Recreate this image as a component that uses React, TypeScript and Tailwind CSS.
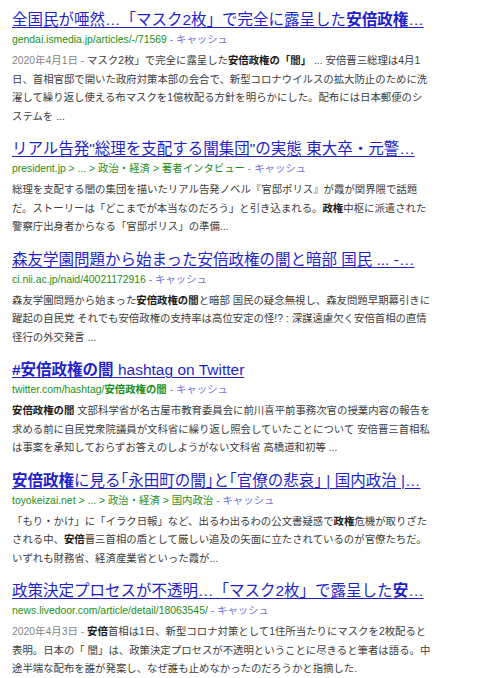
import React from "react";

type Result = {
  title: string;
  url: string;
  date?: string;
  lines: string[];
};

// **...** marks the bold (matched) parts
const results: Result[] = [
  {
    title: "全国民が唖然…「マスク2枚」で完全に露呈した**安倍政権**…",
    url: "gendai.ismedia.jp/articles/-/71569",
    date: "2020年4月1日",
    lines: [
      "マスク2枚」で完全に露呈した**安倍政権の「闇」** ... 安倍晋三総理は4月1",
      "日、首相官邸で開いた政府対策本部の会合で、新型コロナウイルスの拡大防止のために洗",
      "濯して繰り返し使える布マスクを1億枚配る方針を明らかにした。配布には日本郵便のシ",
      "ステムを ...",
    ],
  },
  {
    title: "リアル告発\"総理を支配する闇集団\"の実態 東大卒・元警…",
    url: "president.jp > ... > 政治・経済 > 著者インタビュー",
    lines: [
      "総理を支配する闇の集団を描いたリアル告発ノベル『官邸ポリス』が霞が関界隈で話題",
      "だ。ストーリーは「どこまでが本当なのだろう」と引き込まれる。**政権**中枢に派遣された",
      "警察庁出身者からなる「官邸ポリス」の準備...",
    ],
  },
  {
    title: "森友学園問題から始まった安倍政権の闇と暗部 国民 ... -…",
    url: "ci.nii.ac.jp/naid/40021172916",
    lines: [
      "森友学園問題から始まった**安倍政権の闇**と暗部 国民の疑念無視し、森友問題早期幕引きに",
      "躍起の自民党 それでも安倍政権の支持率は高位安定の怪!? : 深謀遠慮欠く安倍首相の直情",
      "径行の外交発言 ...",
    ],
  },
  {
    title: "**#安倍政権の闇** hashtag on Twitter",
    url: "twitter.com/hashtag/**安倍政権の闇**",
    lines: [
      "**安倍政権の闇** 文部科学省が名古屋市教育委員会に前川喜平前事務次官の授業内容の報告を",
      "求める前に自民党衆院議員が文科省に繰り返し照会していたことについて 安倍晋三首相私",
      "は事案を承知しておらずお答えのしようがない文科省 高橋道和初等 ...",
    ],
  },
  {
    title: "**安倍政権**に見る｢永田町の闇｣と｢官僚の悲哀｣ | 国内政治 |…",
    url: "toyokeizai.net > ... > 政治・経済 > 国内政治",
    lines: [
      "「もり・かけ」に「イラク日報」など、出るわ出るわの公文書疑惑で**政権**危機が取りざた",
      "される中、**安倍**晋三首相の盾として厳しい追及の矢面に立たされているのが官僚たちだ。",
      "いずれも財務省、経済産業省といった霞が...",
    ],
  },
  {
    title: "政策決定プロセスが不透明…「マスク2枚」で露呈した**安**…",
    url: "news.livedoor.com/article/detail/18063545/",
    date: "2020年4月3日",
    lines: [
      "**安倍**首相は1日、新型コロナ対策として1住所当たりにマスクを2枚配ると",
      "表明。日本の「 闇」は、政策決定プロセスが不透明ということに尽きると筆者は語る。中",
      "途半端な配布を誰が発案し、なぜ誰も止めなかったのだろうかと指摘した.",
    ],
  },
];

function Marked({ text, boldClass }: { text: string; boldClass: string }) {
  const parts = text.split("**");
  return (
    <>
      {parts.map((p, i) =>
        i % 2 === 1 ? (
          <b key={i} className={boldClass}>
            {p}
          </b>
        ) : (
          <React.Fragment key={i}>{p}</React.Fragment>
        )
      )}
    </>
  );
}

function ResultItem({ r }: { r: Result }) {
  return (
    <div className="mb-[13px]">
      <a
        href="#"
        className="block whitespace-nowrap text-[15.5px] leading-[20px] text-[#1f1fcc] underline decoration-1 underline-offset-[2px]"
      >
        <Marked text={r.title} boldClass="font-bold" />
      </a>
      <div className="whitespace-nowrap text-[10.4px] leading-[20px]">
        <span className="text-[#1c8f1c]">
          <Marked text={r.url} boldClass="font-bold" />
        </span>
        <span className="text-[#7676d8]"> - キャッシュ</span>
      </div>
      <div className="mt-[2px] text-[10.4px] leading-[18.5px] text-[#3c3c3c]">
        {r.lines.map((line, i) => (
          <div key={i} className="whitespace-nowrap">
            {i === 0 && r.date && <span className="text-[#858585]">{r.date} - </span>}
            <Marked text={line} boldClass="font-bold text-[#1a1a1a]" />
          </div>
        ))}
      </div>
    </div>
  );
}

export default function App() {
  return (
    <div
      className="min-h-[678px] w-[480px] bg-white pl-3 pt-[10px]"
      style={{ fontFamily: '"Liberation Sans", Arial, "Noto Sans CJK JP", sans-serif' }}
    >
      {results.map((r, i) => (
        <ResultItem key={i} r={r} />
      ))}
    </div>
  );
}
